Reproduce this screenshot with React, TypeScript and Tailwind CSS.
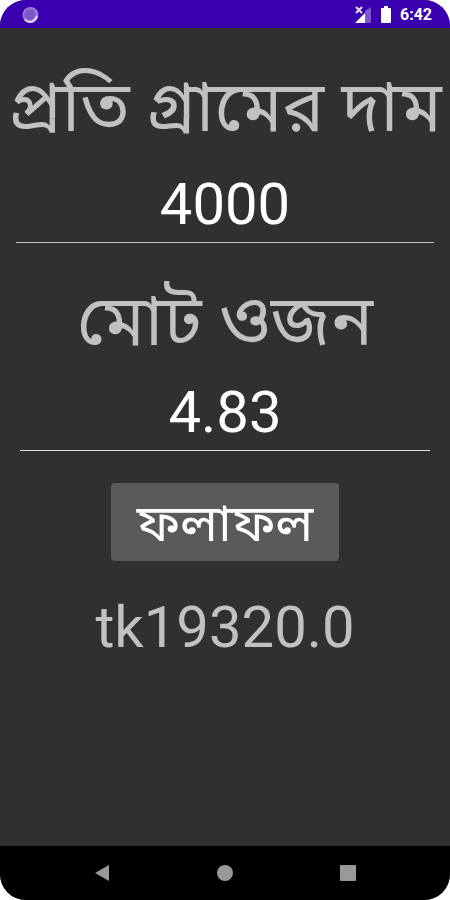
import { useState } from 'react';

export default function App() {
  const [price, setPrice] = useState('4000');
  const [weight, setWeight] = useState('4.83');
  const [result, setResult] = useState('tk19320.0');

  const calculate = () => {
    const total = Math.round(Number(price) * Number(weight) * 100) / 100;
    setResult('tk' + (Number.isInteger(total) ? total.toFixed(1) : total));
  };

  return (
    <div className="min-h-screen bg-white font-['Roboto','Noto_Sans_Bengali','Noto_Sans',sans-serif]">
      <div className="flex min-h-screen flex-col overflow-hidden rounded-[26px] bg-[#303030]">
        {/* Status bar */}
        <header className="flex h-7 items-center justify-between bg-[#3a00b0] pl-5 pr-[18px] pt-px text-white">
          <svg className="h-5 w-5" viewBox="0 0 20 20" fill="none">
            <circle cx="10.500" cy="10" r="8" fill="#9a7bd6" />
            <circle cx="10" cy="9.500" r="5.500" fill="#7f55cb" />
            <path d="M5 14.500c3 4 9 3.500 12-3.500" stroke="#e3d9f5" strokeWidth="2" />
          </svg>
          <div className="flex items-center gap-2">
            <svg className="h-5 w-5" viewBox="0 0 20 20">
              <path d="M13 6l6-4v16h-6z" fill="#7d55cd" />
              <path d="M4 2l6 6M10 2L4 8" stroke="#e6dcf7" strokeWidth="2" />
              <path d="M13 8v10H3z" fill="#fff" />
            </svg>
            <svg className="h-5 w-3" viewBox="0 0 12 20" fill="#fff">
              <path d="M4 1h4v2h2q1 0 1 1v13q0 1-1 1H2q-1 0-1-1V4q0-1 1-1h2z" />
            </svg>
            <span className="text-base font-bold">6:42</span>
          </div>
        </header>

        <main className="flex grow flex-col items-center px-4 pt-px text-[#c1c1c1]">
          <label htmlFor="price" className="mt-8 whitespace-nowrap text-[70px] leading-[92px]">
            প্রতি গ্রামের দাম
          </label>
          <input
            id="price"
            value={price}
            onChange={(e) => setPrice(e.target.value)}
            className="h-[90px] w-full border-b border-[#c1c1c1] bg-transparent pt-3 text-center text-[58px] text-white outline-none"
          />
          <label htmlFor="weight" className="mt-8 whitespace-nowrap text-[70px] leading-[92px]">
            মোট ওজন
          </label>
          <div className="w-full px-1">
            <input
              id="weight"
              value={weight}
              onChange={(e) => setWeight(e.target.value)}
              className="h-[84px] w-full border-b border-[#e0e0e0] bg-transparent pt-2 text-center text-[58px] text-white outline-none"
            />
          </div>
          <button
            onClick={calculate}
            className="mt-8 h-[78px] rounded-sm bg-[#5a5a5c] px-[26px] pt-1 text-[52px] leading-[72px] text-white"
          >
            ফলাফল
          </button>
          <output className="mt-8 text-[58px] leading-[68px]">{result}</output>
        </main>

        {/* Navigation bar */}
        <nav className="flex h-[54px] items-center justify-around bg-black px-10">
          <button aria-label="Back">
            <svg className="h-5 w-5" viewBox="0 0 20 20" fill="#999">
              <path d="M17 2v16L3 10z" />
            </svg>
          </button>
          <button aria-label="Home">
            <svg className="h-5 w-5" viewBox="0 0 20 20" fill="#999">
              <circle cx="10" cy="10" r="8" />
            </svg>
          </button>
          <button aria-label="Recent">
            <svg className="h-5 w-5" viewBox="0 0 20 20" fill="#999">
              <rect x="2" y="2" width="16" height="16" rx="1" />
            </svg>
          </button>
        </nav>
      </div>
    </div>
  );
}
